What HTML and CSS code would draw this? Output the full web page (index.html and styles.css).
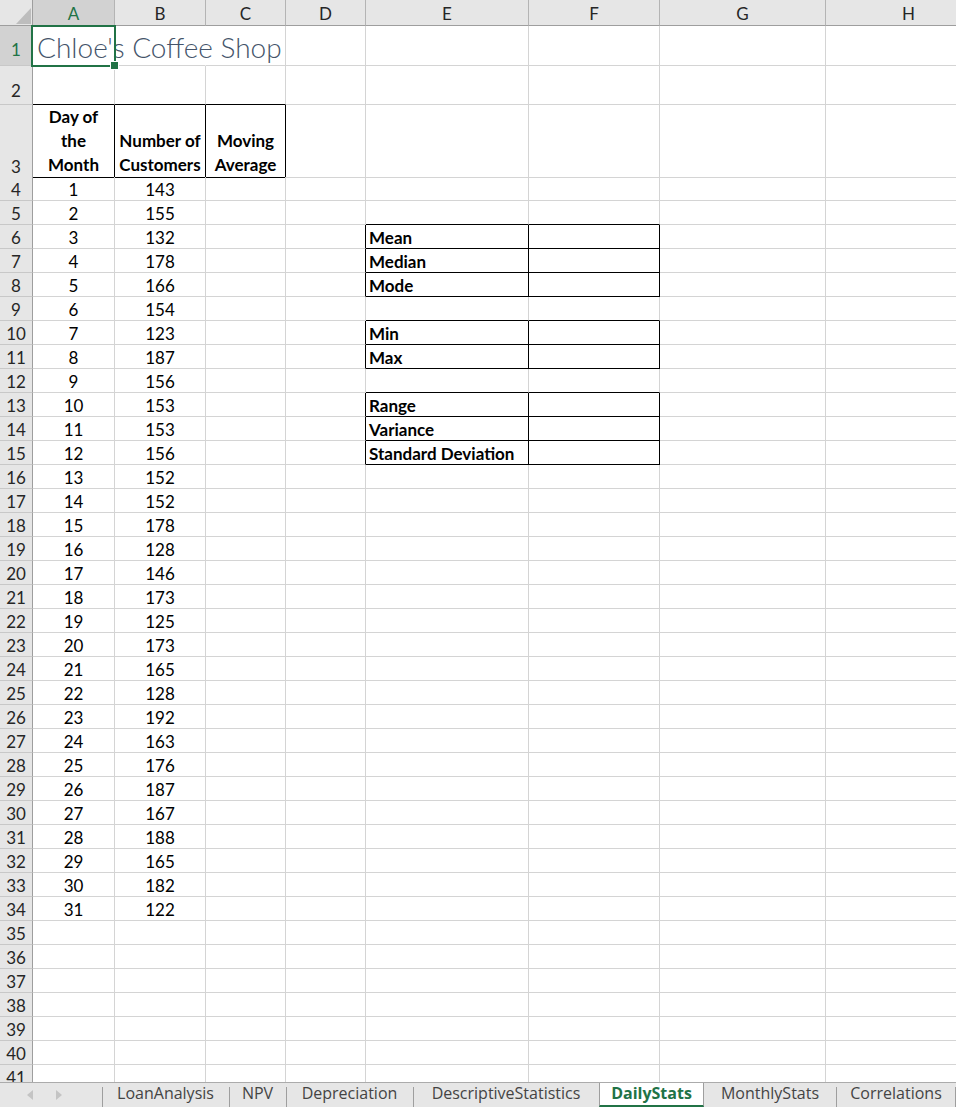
FILE: index.html
```html
<!DOCTYPE html>
<html lang="en">
<head>
<meta charset="utf-8">
<title>DailyStats</title>
<link rel="stylesheet" href="styles.css">
</head>
<body>
<div class="app">
  <div class="sheet">
    <div class="row hdr">
      <div class="corner"><svg width="15" height="16" viewBox="0 0 15 16"><polygon points="0,16 15,16 15,0" fill="#bdbdbd"/></svg></div>
      <div class="ch sel">A</div><div class="ch">B</div><div class="ch">C</div><div class="ch">D</div><div class="ch">E</div><div class="ch">F</div><div class="ch">G</div><div class="ch">H</div>
    </div>
    <div class="row r1">
      <div class="rh sel p1">1</div>
      <div class="c title nr a1">Chloe's Coffee Shop<span class="cursor"></span></div>
      <div class="c nr"></div><div class="c"></div><div class="c"></div><div class="c"></div><div class="c"></div><div class="c"></div><div class="c"></div>
    </div>
    <div class="row r2">
      <div class="rh p2">2</div>
      <div class="c bb"></div><div class="c bb"></div><div class="c bb"></div><div class="c"></div><div class="c"></div><div class="c"></div><div class="c"></div><div class="c"></div>
    </div>
    <div class="row r3">
      <div class="rh">3</div>
      <div class="c head bb br"><span>Day of<br>the<br>Month</span></div>
      <div class="c head bb br"><span>Number of<br>Customers</span></div>
      <div class="c head bb br"><span>Moving<br>Average</span></div>
      <div class="c"></div><div class="c"></div><div class="c"></div><div class="c"></div><div class="c"></div>
    </div>
    <div class="row"><div class="rh">4</div><div class="c n">1</div><div class="c n">143</div><div class="c"></div><div class="c"></div><div class="c"></div><div class="c"></div><div class="c"></div><div class="c"></div></div>
    <div class="row"><div class="rh">5</div><div class="c n">2</div><div class="c n">155</div><div class="c"></div><div class="c"></div><div class="c bb"></div><div class="c bb"></div><div class="c"></div><div class="c"></div></div>
    <div class="row"><div class="rh">6</div><div class="c n">3</div><div class="c n">132</div><div class="c"></div><div class="c br"></div><div class="c b br bb">Mean</div><div class="c br bb"></div><div class="c"></div><div class="c"></div></div>
    <div class="row"><div class="rh">7</div><div class="c n">4</div><div class="c n">178</div><div class="c"></div><div class="c br"></div><div class="c b br bb">Median</div><div class="c br bb"></div><div class="c"></div><div class="c"></div></div>
    <div class="row"><div class="rh">8</div><div class="c n">5</div><div class="c n">166</div><div class="c"></div><div class="c br"></div><div class="c b br bb">Mode</div><div class="c br bb"></div><div class="c"></div><div class="c"></div></div>
    <div class="row"><div class="rh">9</div><div class="c n">6</div><div class="c n">154</div><div class="c"></div><div class="c"></div><div class="c bb"></div><div class="c bb"></div><div class="c"></div><div class="c"></div></div>
    <div class="row"><div class="rh">10</div><div class="c n">7</div><div class="c n">123</div><div class="c"></div><div class="c br"></div><div class="c b br bb">Min</div><div class="c br bb"></div><div class="c"></div><div class="c"></div></div>
    <div class="row"><div class="rh">11</div><div class="c n">8</div><div class="c n">187</div><div class="c"></div><div class="c br"></div><div class="c b br bb">Max</div><div class="c br bb"></div><div class="c"></div><div class="c"></div></div>
    <div class="row"><div class="rh">12</div><div class="c n">9</div><div class="c n">156</div><div class="c"></div><div class="c"></div><div class="c bb"></div><div class="c bb"></div><div class="c"></div><div class="c"></div></div>
    <div class="row"><div class="rh">13</div><div class="c n">10</div><div class="c n">153</div><div class="c"></div><div class="c br"></div><div class="c b br bb">Range</div><div class="c br bb"></div><div class="c"></div><div class="c"></div></div>
    <div class="row"><div class="rh">14</div><div class="c n">11</div><div class="c n">153</div><div class="c"></div><div class="c br"></div><div class="c b br bb">Variance</div><div class="c br bb"></div><div class="c"></div><div class="c"></div></div>
    <div class="row"><div class="rh">15</div><div class="c n">12</div><div class="c n">156</div><div class="c"></div><div class="c br"></div><div class="c b br bb">Standard Deviation</div><div class="c br bb"></div><div class="c"></div><div class="c"></div></div>
    <div class="row"><div class="rh">16</div><div class="c n">13</div><div class="c n">152</div><div class="c"></div><div class="c"></div><div class="c"></div><div class="c"></div><div class="c"></div><div class="c"></div></div>
    <div class="row"><div class="rh">17</div><div class="c n">14</div><div class="c n">152</div><div class="c"></div><div class="c"></div><div class="c"></div><div class="c"></div><div class="c"></div><div class="c"></div></div>
    <div class="row"><div class="rh">18</div><div class="c n">15</div><div class="c n">178</div><div class="c"></div><div class="c"></div><div class="c"></div><div class="c"></div><div class="c"></div><div class="c"></div></div>
    <div class="row"><div class="rh">19</div><div class="c n">16</div><div class="c n">128</div><div class="c"></div><div class="c"></div><div class="c"></div><div class="c"></div><div class="c"></div><div class="c"></div></div>
    <div class="row"><div class="rh">20</div><div class="c n">17</div><div class="c n">146</div><div class="c"></div><div class="c"></div><div class="c"></div><div class="c"></div><div class="c"></div><div class="c"></div></div>
    <div class="row"><div class="rh">21</div><div class="c n">18</div><div class="c n">173</div><div class="c"></div><div class="c"></div><div class="c"></div><div class="c"></div><div class="c"></div><div class="c"></div></div>
    <div class="row"><div class="rh">22</div><div class="c n">19</div><div class="c n">125</div><div class="c"></div><div class="c"></div><div class="c"></div><div class="c"></div><div class="c"></div><div class="c"></div></div>
    <div class="row"><div class="rh">23</div><div class="c n">20</div><div class="c n">173</div><div class="c"></div><div class="c"></div><div class="c"></div><div class="c"></div><div class="c"></div><div class="c"></div></div>
    <div class="row"><div class="rh">24</div><div class="c n">21</div><div class="c n">165</div><div class="c"></div><div class="c"></div><div class="c"></div><div class="c"></div><div class="c"></div><div class="c"></div></div>
    <div class="row"><div class="rh">25</div><div class="c n">22</div><div class="c n">128</div><div class="c"></div><div class="c"></div><div class="c"></div><div class="c"></div><div class="c"></div><div class="c"></div></div>
    <div class="row"><div class="rh">26</div><div class="c n">23</div><div class="c n">192</div><div class="c"></div><div class="c"></div><div class="c"></div><div class="c"></div><div class="c"></div><div class="c"></div></div>
    <div class="row"><div class="rh">27</div><div class="c n">24</div><div class="c n">163</div><div class="c"></div><div class="c"></div><div class="c"></div><div class="c"></div><div class="c"></div><div class="c"></div></div>
    <div class="row"><div class="rh">28</div><div class="c n">25</div><div class="c n">176</div><div class="c"></div><div class="c"></div><div class="c"></div><div class="c"></div><div class="c"></div><div class="c"></div></div>
    <div class="row"><div class="rh">29</div><div class="c n">26</div><div class="c n">187</div><div class="c"></div><div class="c"></div><div class="c"></div><div class="c"></div><div class="c"></div><div class="c"></div></div>
    <div class="row"><div class="rh">30</div><div class="c n">27</div><div class="c n">167</div><div class="c"></div><div class="c"></div><div class="c"></div><div class="c"></div><div class="c"></div><div class="c"></div></div>
    <div class="row"><div class="rh">31</div><div class="c n">28</div><div class="c n">188</div><div class="c"></div><div class="c"></div><div class="c"></div><div class="c"></div><div class="c"></div><div class="c"></div></div>
    <div class="row"><div class="rh">32</div><div class="c n">29</div><div class="c n">165</div><div class="c"></div><div class="c"></div><div class="c"></div><div class="c"></div><div class="c"></div><div class="c"></div></div>
    <div class="row"><div class="rh">33</div><div class="c n">30</div><div class="c n">182</div><div class="c"></div><div class="c"></div><div class="c"></div><div class="c"></div><div class="c"></div><div class="c"></div></div>
    <div class="row"><div class="rh">34</div><div class="c n">31</div><div class="c n">122</div><div class="c"></div><div class="c"></div><div class="c"></div><div class="c"></div><div class="c"></div><div class="c"></div></div>
    <div class="row"><div class="rh">35</div><div class="c"></div><div class="c"></div><div class="c"></div><div class="c"></div><div class="c"></div><div class="c"></div><div class="c"></div><div class="c"></div></div>
    <div class="row"><div class="rh">36</div><div class="c"></div><div class="c"></div><div class="c"></div><div class="c"></div><div class="c"></div><div class="c"></div><div class="c"></div><div class="c"></div></div>
    <div class="row"><div class="rh">37</div><div class="c"></div><div class="c"></div><div class="c"></div><div class="c"></div><div class="c"></div><div class="c"></div><div class="c"></div><div class="c"></div></div>
    <div class="row"><div class="rh">38</div><div class="c"></div><div class="c"></div><div class="c"></div><div class="c"></div><div class="c"></div><div class="c"></div><div class="c"></div><div class="c"></div></div>
    <div class="row"><div class="rh">39</div><div class="c"></div><div class="c"></div><div class="c"></div><div class="c"></div><div class="c"></div><div class="c"></div><div class="c"></div><div class="c"></div></div>
    <div class="row"><div class="rh">40</div><div class="c"></div><div class="c"></div><div class="c"></div><div class="c"></div><div class="c"></div><div class="c"></div><div class="c"></div><div class="c"></div></div>
    <div class="row"><div class="rh">41</div><div class="c"></div><div class="c"></div><div class="c"></div><div class="c"></div><div class="c"></div><div class="c"></div><div class="c"></div><div class="c"></div></div>
  </div>
  <div class="tabs">
    <div class="nav">
      <svg width="6" height="10" viewBox="0 0 6 10"><polygon points="6,0 6,10 0,5" fill="#c4c4c4"/></svg>
      <svg width="6" height="10" viewBox="0 0 6 10"><polygon points="0,0 0,10 6,5" fill="#c4c4c4"/></svg>
    </div>
    <div class="tab t-loan">LoanAnalysis</div>
    <div class="tab t-npv">NPV</div>
    <div class="tab t-dep">Depreciation</div>
    <div class="tab t-desc">DescriptiveStatistics</div>
    <div class="tab t-daily active">DailyStats</div>
    <div class="tab t-month">MonthlyStats</div>
    <div class="tab t-corr last">Correlations</div>
  </div>
</div>
</body>
</html>
```

FILE: styles.css
```css
* { box-sizing: border-box; }
html, body { margin: 0; padding: 0; background: #fff; }
body {
  font-family: Lato, "Open Sans", sans-serif;
  font-size: 17px;
  color: #000;
}
.app {
  width: 956px;
  height: 1107px;
  display: flex;
  flex-direction: column;
  overflow: hidden;
}
.sheet {
  height: 1082px;
  flex: none;
  overflow: hidden;
}
.row {
  display: grid;
  grid-template-columns: 33px 82px 91px 80px 80px 163px 131px 166px 166px;
  height: 24px;
}
.row.hdr { height: 26px; }
.row.r1 { height: 40px; }
.row.r2 { height: 39px; }
.row.r3 { height: 72px; }

.corner {
  background: #e6e6e6;
  border-right: 1px solid #9e9e9e;
  border-bottom: 1px solid #9e9e9e;
  display: flex;
  align-items: flex-end;
  justify-content: flex-end;
  padding: 0 1px 1px 0;
}
.corner svg { display: block; }
.ch {
  background: #e6e6e6;
  border-right: 1px solid #b4b4b4;
  border-bottom: 1px solid #9e9e9e;
  display: flex;
  align-items: flex-end;
  justify-content: center;
  line-height: 20px;
  padding-bottom: 1px;
  color: #262626;
}
.ch.sel { background: #d2d2d2; color: #217346; }

.rh {
  background: #e6e6e6;
  border-right: 1px solid #9e9e9e;
  border-bottom: 1px solid #c8c8c8;
  display: flex;
  align-items: flex-end;
  justify-content: center;
  line-height: 20px;
  padding-bottom: 0;
  color: #262626;
}
.rh.sel { background: #d2d2d2; color: #217346; }
.rh.p1 { padding-bottom: 5px; }
.rh.p2 { padding-bottom: 3px; }

.c {
  border-right: 1px solid #d4d4d4;
  border-bottom: 1px solid #d4d4d4;
  display: flex;
  align-items: flex-end;
  padding: 0 3px 0;
  line-height: 20px;
  white-space: nowrap;
  min-width: 0;
}
.n { justify-content: center; }
.b { font-weight: 700; }
.bb { border-bottom-color: #000; }
.br { border-right-color: #000; }
.nr { border-right-color: transparent; }

.head {
  font-weight: 700;
  justify-content: center;
  text-align: center;
  line-height: 24px;
  padding: 0 2px 0;
}

.title {
  font-weight: 300;
  font-size: 28px;
  line-height: 34px;
  color: #44546a;
  padding: 0 4px 1px;
}
.a1 { position: relative; }
.cursor {
  position: absolute;
  left: -2px;
  top: -1px;
  width: 85px;
  height: 42px;
  border: 2px solid #217346;
  pointer-events: none;
}
.cursor::after {
  content: "";
  position: absolute;
  right: -5px;
  bottom: -5px;
  width: 7px;
  height: 7px;
  background: #217346;
  border: 1px solid #fff;
}

.tabs {
  flex: none;
  height: 25px;
  border-top: 1px solid #ababab;
  background: #e6e6e6;
  display: flex;
  font-family: "Open Sans", Lato, sans-serif;
  font-size: 16px;
  color: #444;
}
.nav {
  width: 102px;
  flex: none;
  display: flex;
  align-items: center;
  gap: 23px;
  padding-left: 27px;
}
.nav svg { display: block; }
.tab {
  position: relative;
  flex: none;
  text-align: center;
  line-height: 20px;
  white-space: nowrap;
}
.t-loan { width: 127px; }
.t-npv { width: 57px; }
.t-dep { width: 127px; }
.t-desc { width: 186px; }
.t-daily { width: 105px; }
.t-month { width: 132px; }
.t-corr { width: 120px; }
.tab::before {
  content: "";
  position: absolute;
  left: 0;
  top: 4px;
  bottom: 0;
  border-left: 1px solid #9e9e9e;
}
.tab.last::after {
  content: "";
  position: absolute;
  right: 0;
  top: 4px;
  bottom: 0;
  border-left: 1px solid #9e9e9e;
}
.tab.active {
  background: #fff;
  border-left: 1px solid #9e9e9e;
  border-right: 1px solid #9e9e9e;
  border-bottom: 2px solid #217346;
  color: #217346;
  font-weight: 700;
}
.tab.active::before,
.tab.active + .tab::before { display: none; }
```
